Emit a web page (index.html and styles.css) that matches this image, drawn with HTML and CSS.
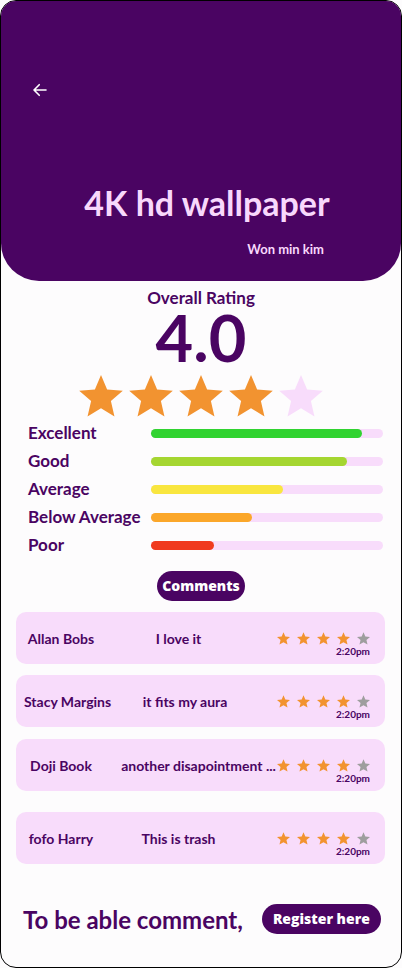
FILE: index.html
```html
<!DOCTYPE html>
<html>
<head>
  <title>Rating</title>
  <link rel="stylesheet" href="styles.css">
</head>
<body>

  <div class="phone">
    <div class="header">
      <svg class="back" width="18" height="18" viewBox="0 0 24 24">
        <path d="M20 12H4M11 5l-7 7 7 7" fill="none" stroke="#fff" stroke-width="2.2" stroke-linecap="round" stroke-linejoin="round"/>
      </svg>
      <h1 class="title">4K hd wallpaper</h1>
      <div class="author">Won min kim</div>
    </div>

    <div class="overall">
      <div class="overall-label">Overall Rating</div>
      <div class="overall-score">4.0</div>
      <div class="big-stars">
        <svg viewBox="2 2 20 19.27"><path class="on" d="M12 17.27L18.18 21l-1.64-7.03L22 9.24l-7.19-.61L12 2 9.19 8.63 2 9.24l5.46 4.73L5.82 21z"/></svg>
        <svg viewBox="2 2 20 19.27"><path class="on" d="M12 17.27L18.18 21l-1.64-7.03L22 9.24l-7.19-.61L12 2 9.19 8.63 2 9.24l5.46 4.73L5.82 21z"/></svg>
        <svg viewBox="2 2 20 19.27"><path class="on" d="M12 17.27L18.18 21l-1.64-7.03L22 9.24l-7.19-.61L12 2 9.19 8.63 2 9.24l5.46 4.73L5.82 21z"/></svg>
        <svg viewBox="2 2 20 19.27"><path class="on" d="M12 17.27L18.18 21l-1.64-7.03L22 9.24l-7.19-.61L12 2 9.19 8.63 2 9.24l5.46 4.73L5.82 21z"/></svg>
        <svg viewBox="2 2 20 19.27"><path class="off" d="M12 17.27L18.18 21l-1.64-7.03L22 9.24l-7.19-.61L12 2 9.19 8.63 2 9.24l5.46 4.73L5.82 21z"/></svg>
      </div>
    </div>

    <div class="bars">
      <div class="bar-label">Excellent</div>
      <div class="track"><div class="fill excellent" style="width: 91%"></div></div>
      <div class="bar-label">Good</div>
      <div class="track"><div class="fill good" style="width: 84.5%"></div></div>
      <div class="bar-label">Average</div>
      <div class="track"><div class="fill average" style="width: 57%"></div></div>
      <div class="bar-label">Below Average</div>
      <div class="track"><div class="fill below" style="width: 43.5%"></div></div>
      <div class="bar-label">Poor</div>
      <div class="track"><div class="fill poor" style="width: 27%"></div></div>
    </div>

    <div class="comments-head">
      <span class="pill">Comments</span>
    </div>

    <div class="comments">
      <div class="card">
        <div class="name">Allan Bobs</div>
        <div class="text">I love it</div>
        <div class="meta">
          <div class="small-stars">
            <svg viewBox="2 2 20 19.27"><path class="on" d="M12 17.27L18.18 21l-1.64-7.03L22 9.24l-7.19-.61L12 2 9.19 8.63 2 9.24l5.46 4.73L5.82 21z"/></svg>
            <svg viewBox="2 2 20 19.27"><path class="on" d="M12 17.27L18.18 21l-1.64-7.03L22 9.24l-7.19-.61L12 2 9.19 8.63 2 9.24l5.46 4.73L5.82 21z"/></svg>
            <svg viewBox="2 2 20 19.27"><path class="on" d="M12 17.27L18.18 21l-1.64-7.03L22 9.24l-7.19-.61L12 2 9.19 8.63 2 9.24l5.46 4.73L5.82 21z"/></svg>
            <svg viewBox="2 2 20 19.27"><path class="on" d="M12 17.27L18.18 21l-1.64-7.03L22 9.24l-7.19-.61L12 2 9.19 8.63 2 9.24l5.46 4.73L5.82 21z"/></svg>
            <svg viewBox="2 2 20 19.27"><path class="grey" d="M12 17.27L18.18 21l-1.64-7.03L22 9.24l-7.19-.61L12 2 9.19 8.63 2 9.24l5.46 4.73L5.82 21z"/></svg>
          </div>
          <div class="time">2:20pm</div>
        </div>
      </div>

      <div class="card">
        <div class="name">Stacy Margins</div>
        <div class="text">it fits my aura</div>
        <div class="meta">
          <div class="small-stars">
            <svg viewBox="2 2 20 19.27"><path class="on" d="M12 17.27L18.18 21l-1.64-7.03L22 9.24l-7.19-.61L12 2 9.19 8.63 2 9.24l5.46 4.73L5.82 21z"/></svg>
            <svg viewBox="2 2 20 19.27"><path class="on" d="M12 17.27L18.18 21l-1.64-7.03L22 9.24l-7.19-.61L12 2 9.19 8.63 2 9.24l5.46 4.73L5.82 21z"/></svg>
            <svg viewBox="2 2 20 19.27"><path class="on" d="M12 17.27L18.18 21l-1.64-7.03L22 9.24l-7.19-.61L12 2 9.19 8.63 2 9.24l5.46 4.73L5.82 21z"/></svg>
            <svg viewBox="2 2 20 19.27"><path class="on" d="M12 17.27L18.18 21l-1.64-7.03L22 9.24l-7.19-.61L12 2 9.19 8.63 2 9.24l5.46 4.73L5.82 21z"/></svg>
            <svg viewBox="2 2 20 19.27"><path class="grey" d="M12 17.27L18.18 21l-1.64-7.03L22 9.24l-7.19-.61L12 2 9.19 8.63 2 9.24l5.46 4.73L5.82 21z"/></svg>
          </div>
          <div class="time">2:20pm</div>
        </div>
      </div>

      <div class="card card-third">
        <div class="name">Doji Book</div>
        <div class="text text-long">another disapointment ...</div>
        <div class="meta">
          <div class="small-stars">
            <svg viewBox="2 2 20 19.27"><path class="on" d="M12 17.27L18.18 21l-1.64-7.03L22 9.24l-7.19-.61L12 2 9.19 8.63 2 9.24l5.46 4.73L5.82 21z"/></svg>
            <svg viewBox="2 2 20 19.27"><path class="on" d="M12 17.27L18.18 21l-1.64-7.03L22 9.24l-7.19-.61L12 2 9.19 8.63 2 9.24l5.46 4.73L5.82 21z"/></svg>
            <svg viewBox="2 2 20 19.27"><path class="on" d="M12 17.27L18.18 21l-1.64-7.03L22 9.24l-7.19-.61L12 2 9.19 8.63 2 9.24l5.46 4.73L5.82 21z"/></svg>
            <svg viewBox="2 2 20 19.27"><path class="on" d="M12 17.27L18.18 21l-1.64-7.03L22 9.24l-7.19-.61L12 2 9.19 8.63 2 9.24l5.46 4.73L5.82 21z"/></svg>
            <svg viewBox="2 2 20 19.27"><path class="grey" d="M12 17.27L18.18 21l-1.64-7.03L22 9.24l-7.19-.61L12 2 9.19 8.63 2 9.24l5.46 4.73L5.82 21z"/></svg>
          </div>
          <div class="time">2:20pm</div>
        </div>
      </div>

      <div class="card card-last">
        <div class="name">fofo Harry</div>
        <div class="text">This is trash</div>
        <div class="meta">
          <div class="small-stars">
            <svg viewBox="2 2 20 19.27"><path class="on" d="M12 17.27L18.18 21l-1.64-7.03L22 9.24l-7.19-.61L12 2 9.19 8.63 2 9.24l5.46 4.73L5.82 21z"/></svg>
            <svg viewBox="2 2 20 19.27"><path class="on" d="M12 17.27L18.18 21l-1.64-7.03L22 9.24l-7.19-.61L12 2 9.19 8.63 2 9.24l5.46 4.73L5.82 21z"/></svg>
            <svg viewBox="2 2 20 19.27"><path class="on" d="M12 17.27L18.18 21l-1.64-7.03L22 9.24l-7.19-.61L12 2 9.19 8.63 2 9.24l5.46 4.73L5.82 21z"/></svg>
            <svg viewBox="2 2 20 19.27"><path class="on" d="M12 17.27L18.18 21l-1.64-7.03L22 9.24l-7.19-.61L12 2 9.19 8.63 2 9.24l5.46 4.73L5.82 21z"/></svg>
            <svg viewBox="2 2 20 19.27"><path class="grey" d="M12 17.27L18.18 21l-1.64-7.03L22 9.24l-7.19-.61L12 2 9.19 8.63 2 9.24l5.46 4.73L5.82 21z"/></svg>
          </div>
          <div class="time">2:20pm</div>
        </div>
      </div>
    </div>

    <div class="footer">
      <span class="footer-text">To be able comment,</span>
      <span class="pill pill-register">Register here</span>
    </div>
  </div>

</body>
</html>
```

FILE: styles.css
```css
body {
  margin: 0;
  padding: 0;
  background: #fdfcfd;
  font-family: "Lato", "Open Sans", sans-serif;
  color: #4a0462;
}
.phone {
  width: 400px;
  height: 966px;
  border: 1px solid #000;
  border-radius: 16px;
  overflow: hidden;
  background: #fdfcfd;
}

/* header */
.header {
  height: 280px;
  box-sizing: border-box;
  padding-top: 80px;
  background: #4a0462;
  border-radius: 0 0 38px 38px;
}
.back {
  display: block;
  margin-left: 30px;
}
.title {
  margin: 84px 0 0 12px;
  text-align: center;
  font-size: 34px;
  font-weight: 700;
  line-height: 40px;
  color: #f8d8fc;
}
.author {
  margin-top: 18px;
  padding-right: 77px;
  text-align: right;
  font-size: 13px;
  font-weight: 700;
  color: #f8d8fc;
}

/* overall */
.overall {
  text-align: center;
  padding-top: 6px;
}
.overall-label {
  font-size: 17px;
  font-weight: 700;
  line-height: 22px;
}
.overall-score {
  font-size: 65px;
  font-weight: 700;
  line-height: 57px;
}
.big-stars {
  display: flex;
  justify-content: center;
  gap: 6px;
  margin-top: 9px;
}
.big-stars svg {
  width: 44px;
  height: 42px;
}
.on { fill: #f29330; }
.off { fill: #f8dcfb; }
.grey { fill: #9e9e9e; }

/* bars */
.bars {
  display: grid;
  grid-template-columns: 123px 232px;
  row-gap: 8px;
  align-items: center;
  margin: 6px 0 0 27px;
}
.bar-label {
  font-size: 17px;
  font-weight: 700;
  line-height: 20px;
  white-space: nowrap;
}
.track {
  height: 9px;
  border-radius: 5px;
  background: #f8dcfb;
}
.fill {
  height: 9px;
  border-radius: 5px;
}
.excellent { background: #31d331; }
.good { background: #a5d631; }
.average { background: #f9e63f; }
.below { background: #fba72a; }
.poor { background: #f03a1e; }

/* comments */
.comments-head {
  text-align: center;
  margin-top: 16px;
}
.pill {
  display: inline-block;
  background: #4a0462;
  color: #fff;
  border-radius: 16px;
  font-family: "Open Sans", "Lato", sans-serif;
  font-weight: 800;
  font-size: 14px;
  line-height: 30px;
  padding: 0 5px;
}
.comments {
  margin: 11px 16px 0 15px;
  display: flex;
  flex-direction: column;
  gap: 11px;
}
.card {
  height: 52px;
  box-sizing: border-box;
  display: flex;
  align-items: center;
  padding: 0 15px 0 8px;
  background: #f8dcfb;
  border-radius: 10px;
  font-size: 14px;
  font-weight: 700;
}
.card-third {
  margin-top: 1px;
}
.card-last {
  margin-top: 10px;
}
.name {
  min-width: 74px;
  flex-shrink: 0;
  text-align: center;
  white-space: nowrap;
}
.text {
  flex: 1;
  min-width: 0;
  margin-right: 18px;
  text-align: center;
  white-space: nowrap;
}
.text-long {
  margin: 0 0 0 22px;
}
.meta {
  flex-shrink: 0;
  display: flex;
  flex-direction: column;
  align-items: flex-end;
  padding-top: 12px;
}
.small-stars {
  display: flex;
  gap: 7px;
}
.small-stars svg {
  width: 13px;
  height: 13px;
}
.time {
  font-size: 10px;
  font-weight: 700;
  line-height: 12px;
}

/* footer */
.footer {
  display: flex;
  align-items: center;
  margin: 40px 0 0 22px;
  gap: 19px;
}
.footer-text {
  font-size: 24px;
  font-weight: 700;
}
.pill-register {
  font-size: 14px;
  padding: 0 11px;
}
```
